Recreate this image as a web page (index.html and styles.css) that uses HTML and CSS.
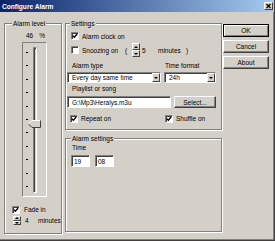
FILE: index.html
```html
<!DOCTYPE html>
<html lang="en">
<head>
    <meta charset="UTF-8">
    <title>Configure Alarm</title>
    <link rel="stylesheet" href="styles.css">
</head>
<body>
    <div class="window">
        <div class="titlebar">
            <span class="title">Configure Alarm</span>
            <span class="close">
                <svg width="7" height="6" viewBox="0 0 7 6"><path d="M1.5 1 L5.5 5 M5.5 1 L1.5 5" stroke="#000" stroke-width="1.2"/></svg>
            </span>
        </div>

        <div class="main">
            <fieldset class="group level-group">
                <legend>Alarm level</legend>
                <div class="level-value"><span>46</span><span class="pct">%</span></div>
                <div class="slider">
                    <div class="ticks">
                        <i></i><i></i><i></i><i></i><i></i><i></i><i></i><i></i><i></i><i></i><i></i>
                    </div>
                    <div class="track"></div>
                    <svg class="thumb" style="top:77px" width="13" height="8" viewBox="0 0 13 8">
                        <path d="M0.5 4 L4 0.5 H12.5 V7.5 H4 Z" fill="#d4d0c8"/>
                        <path d="M0.5 4 L4 0.5 H12" stroke="#fff" fill="none"/>
                        <path d="M12.5 0.5 V7.5 H4 L0.5 4" stroke="#404040" fill="none"/>
                    </svg>
                </div>
                <label class="check fade-in"><span class="box"><svg width="6" height="6" viewBox="0 0 6 6"><path d="M0.8 2.6 L2.3 4.2 L5.2 1" stroke="#000" stroke-width="1.3" fill="none"/></svg></span>Fade in</label>
                <div class="spin-row">
                    <span class="spin"><span class="up"></span><span class="down"></span></span>
                    <span class="spin-val">4</span>
                    <span>minutes</span>
                </div>
            </fieldset>

            <div class="middle">
                <fieldset class="group settings">
                    <legend>Settings</legend>
                    <label class="check row-clock"><span class="box"><svg width="6" height="6" viewBox="0 0 6 6"><path d="M0.8 2.6 L2.3 4.2 L5.2 1" stroke="#000" stroke-width="1.3" fill="none"/></svg></span>Alarm clock on</label>
                    <div class="snooze-row">
                        <label class="check snooze-label"><span class="box"></span>Snoozing on</label>
                        <span class="paren">(</span>
                        <span class="spin tall"><span class="up"></span><span class="down"></span></span>
                        <span class="snooze-val">5</span>
                        <span class="snooze-unit">minutes</span>
                        <span>)</span>
                    </div>
                    <div class="label-row">
                        <span class="type-label">Alarm type</span>
                        <span class="format-label">Time format</span>
                    </div>
                    <div class="combo-row">
                        <div class="combo type-combo"><span>Every day same time</span><span class="drop"></span></div>
                        <div class="combo format-combo"><span>24h</span><span class="drop"></span></div>
                    </div>
                    <div class="playlist-label">Playlist or song</div>
                    <div class="edit-row">
                        <div class="edit playlist">G:\Mp3\Heralys.m3u</div>
                        <button class="btn select">Select...</button>
                    </div>
                    <div class="toggle-row">
                        <label class="check repeat"><span class="box"><svg width="6" height="6" viewBox="0 0 6 6"><path d="M0.8 2.6 L2.3 4.2 L5.2 1" stroke="#000" stroke-width="1.3" fill="none"/></svg></span>Repeat on</label>
                        <label class="check shuffle"><span class="box"><svg width="6" height="6" viewBox="0 0 6 6"><path d="M0.8 2.6 L2.3 4.2 L5.2 1" stroke="#000" stroke-width="1.3" fill="none"/></svg></span>Shuffle on</label>
                    </div>
                </fieldset>

                <fieldset class="group alarm-settings">
                    <legend>Alarm settings</legend>
                    <div class="time-label">Time</div>
                    <div class="time-row">
                        <div class="edit time">19</div>
                        <div class="edit time">08</div>
                    </div>
                </fieldset>
            </div>

            <div class="buttons">
                <button class="btn default">OK</button>
                <button class="btn">Cancel</button>
                <button class="btn">About</button>
            </div>
        </div>
    </div>
</body>
</html>
```

FILE: styles.css
```css
body {
    margin: 0;
    background-color: #d4d0c8;
    font-family: "Liberation Sans", Arial, sans-serif;
    font-size: 6.5px;
    color: #000;
}
.window {
    width: 275px;
    height: 241px;
    box-sizing: border-box;
    border-right: 1px solid #404040;
    border-bottom: 1px solid #404040;
    box-shadow: inset -1px -1px #808080;
    background-color: #d4d0c8;
}
.titlebar {
    height: 12px;
    display: flex;
    align-items: center;
    justify-content: space-between;
    padding: 0 1px 0 2px;
    background: linear-gradient(to right, #0a246a, #a6caf0);
}
.title {
    color: white;
    font-weight: bold;
    font-size: 6.6px;
}
.close {
    width: 9px;
    height: 8px;
    box-sizing: border-box;
    display: flex;
    align-items: center;
    justify-content: center;
    background-color: #d4d0c8;
    border: 1px solid;
    border-color: #fff #404040 #404040 #fff;
}
.main {
    display: flex;
    padding: 7px 0 0 4px;
}

/* group boxes */
.group {
    margin: 0;
    padding: 0;
    min-width: 0;
    box-sizing: border-box;
    border: 1px solid #808080;
    box-shadow: inset 1px 1px #fff, 1px 1px #fff;
}
.group legend {
    height: 9px;
    line-height: 9px;
    padding: 0 1px;
    background-color: #d4d0c8;
}
.level-group {
    width: 58px;
    height: 215px;
}
.level-group legend {
    margin-left: 7px;
}
.middle {
    width: 157px;
    margin-left: 3px;
}
.settings {
    height: 111px;
}
.settings legend {
    margin-left: 4px;
}
.alarm-settings {
    height: 98px;
    margin-top: 4px;
}
.alarm-settings legend {
    margin-left: 5px;
}

/* alarm level */
.level-value {
    margin-top: 3px;
    padding-left: 21px;
    line-height: 9px;
    height: 9px;
}
.level-value .pct {
    margin-left: 6px;
}
.slider {
    position: relative;
    margin: 2px 0 0 17px;
    width: 25px;
    height: 155px;
    box-sizing: border-box;
    border: 1px solid;
    border-color: #808080 #fff #fff #808080;
}
.ticks {
    position: absolute;
    left: 3px;
    top: 9px;
    height: 135px;
    display: flex;
    flex-direction: column;
    justify-content: space-between;
}
.ticks i {
    display: block;
    width: 2px;
    height: 1px;
    background-color: #000;
}
.track {
    position: absolute;
    left: 10px;
    top: 4px;
    width: 4px;
    height: 146px;
    box-sizing: border-box;
    border: 1px solid;
    border-color: #808080 #fff #fff #808080;
    box-shadow: inset 1px 1px #404040;
}
.thumb {
    position: absolute;
    left: 5px;
    display: block;
}

/* checkboxes */
.check {
    display: flex;
    align-items: center;
    height: 9px;
    line-height: 9px;
    white-space: nowrap;
}
.box {
    width: 8px;
    height: 8px;
    box-sizing: border-box;
    display: flex;
    align-items: center;
    justify-content: center;
    margin-right: 3px;
    background-color: white;
    border: 1px solid;
    border-color: #808080 #fff #fff #808080;
    box-shadow: inset 1px 1px #404040;
}
.fade-in {
    margin: 8px 0 0 7px;
}
.fade-in .box {
    margin-right: 4px;
}

/* spin buttons */
.spin {
    width: 8px;
    height: 9px;
    display: flex;
    flex-direction: column;
}
.spin.tall {
    height: 14px;
}
.spin .up,
.spin .down {
    flex: 1;
    display: flex;
    align-items: center;
    justify-content: center;
    box-sizing: border-box;
    background-color: #d4d0c8;
    border: 1px solid;
    border-color: #fff #404040 #404040 #fff;
}
.spin .up::after {
    content: "";
    border-left: 2px solid transparent;
    border-right: 2px solid transparent;
    border-bottom: 2px solid #000;
}
.spin .down::after {
    content: "";
    border-left: 2px solid transparent;
    border-right: 2px solid transparent;
    border-top: 2px solid #000;
}
.spin-row {
    display: flex;
    align-items: center;
    height: 9px;
    line-height: 9px;
    margin: 2px 0 0 8px;
}
.spin-val {
    margin-left: 4px;
    width: 13px;
}

/* settings */
.row-clock {
    margin: 4px 0 0 5px;
    height: 8px;
}
.snooze-row {
    display: flex;
    align-items: center;
    height: 14px;
    margin: 3px 0 0 5px;
    white-space: nowrap;
}
.snooze-label {
    width: 54px;
}
.paren {
    width: 7px;
}
.snooze-val {
    margin-left: 2px;
    width: 16px;
}
.snooze-unit {
    width: 28px;
}
.label-row {
    display: flex;
    height: 9px;
    line-height: 9px;
    margin-top: 4px;
}
.type-label {
    width: 97px;
    padding-left: 6px;
    box-sizing: border-box;
}
.format-label {
    padding-left: 2px;
}
.combo-row {
    display: flex;
    gap: 3px;
    margin: 2px 0 0 1px;
}
.combo,
.edit {
    display: flex;
    align-items: center;
    justify-content: space-between;
    box-sizing: border-box;
    background-color: white;
    border: 1px solid;
    border-color: #808080 #fff #fff #808080;
    box-shadow: inset 1px 1px #404040;
    padding-left: 4px;
    white-space: nowrap;
}
.combo {
    height: 11px;
    padding-right: 0;
}
.type-combo {
    width: 94px;
}
.format-combo {
    width: 52px;
}
.drop {
    width: 8px;
    height: 9px;
    box-sizing: border-box;
    display: flex;
    align-items: center;
    justify-content: center;
    background-color: #d4d0c8;
    border: 1px solid;
    border-color: #fff #404040 #404040 #fff;
}
.drop::after {
    content: "";
    border-left: 2px solid transparent;
    border-right: 2px solid transparent;
    border-top: 2px solid #000;
}
.playlist-label {
    height: 9px;
    line-height: 9px;
    margin-top: 1px;
    padding-left: 6px;
}
.edit-row {
    display: flex;
    gap: 3px;
    margin: 3px 0 0 1px;
}
.edit {
    height: 12px;
}
.playlist {
    width: 104px;
}
.toggle-row {
    display: flex;
    margin: 6px 0 0 4px;
}
.repeat {
    width: 95px;
}

/* alarm settings */
.time-label {
    height: 9px;
    line-height: 9px;
    padding-left: 6px;
}
.time-row {
    display: flex;
    gap: 5px;
    margin: 3px 0 0 5px;
}
.edit.time {
    width: 19px;
    padding-left: 2px;
}

/* buttons */
.btn {
    font: inherit;
    color: #000;
    padding: 0;
    box-sizing: border-box;
    background-color: #d4d0c8;
    border: 1px solid;
    border-color: #fff #404040 #404040 #fff;
    box-shadow: inset -1px -1px #808080;
    cursor: pointer;
}
.btn.default {
    border-color: #000;
    box-shadow: inset 1px 1px #fff, inset -1px -1px #808080;
}
.select {
    width: 42px;
    height: 12px;
}
.buttons {
    display: flex;
    flex-direction: column;
    gap: 3px;
    margin-left: 1px;
    padding-top: 5px;
}
.buttons .btn {
    width: 46px;
    height: 13px;
}
```
